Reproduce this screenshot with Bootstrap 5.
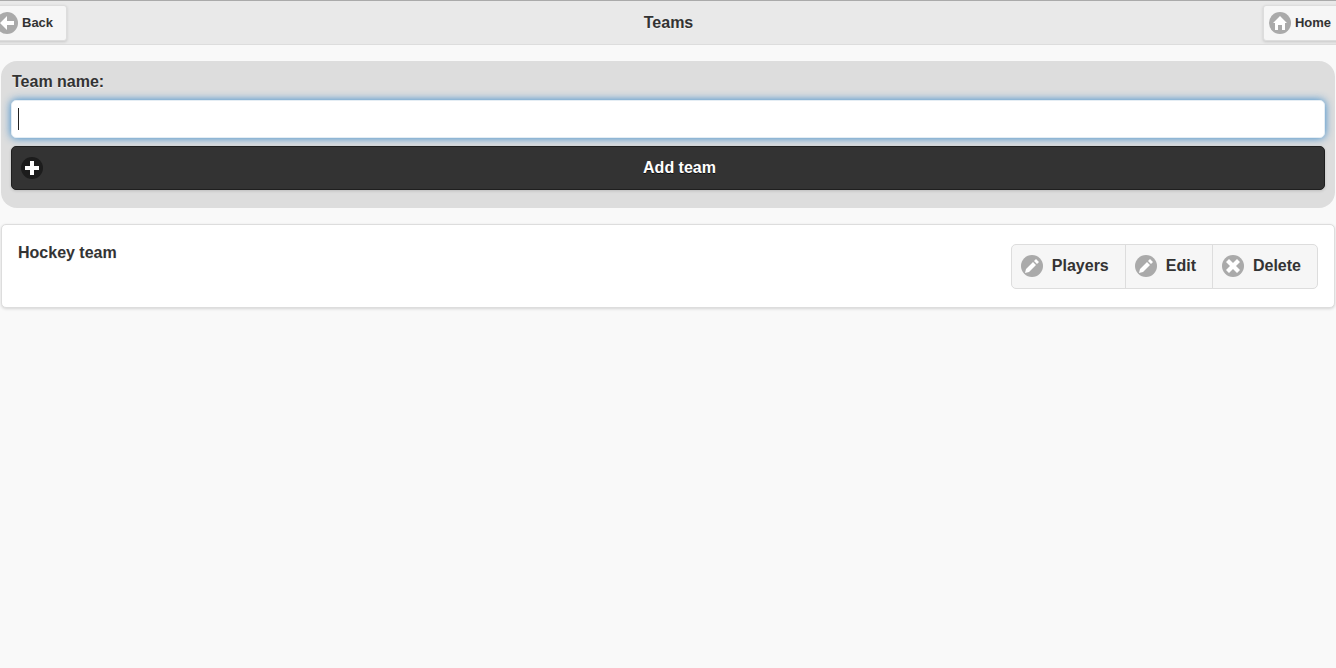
<!DOCTYPE html>
<html lang="en">
<head>
<meta charset="utf-8">
<meta name="viewport" content="width=device-width, initial-scale=1">
<title>Teams</title>
<link href="https://cdn.jsdelivr.net/npm/bootstrap@5.3.0/dist/css/bootstrap.min.css" rel="stylesheet">
<style>
body { font: 700 16px/20px "Liberation Sans", Arial, sans-serif; color: #333; background: #f9f9f9; text-shadow: 0 1px 0 #f3f3f3; }
.topbar { height: 45px; background: #e9e9e9; border-top: 1px solid #aaa; border-bottom: 1px solid #ddd; }
.topbar h1 { font-size: 16px; line-height: 20px; font-weight: 700; padding-left: 1px; }
.btn { --bs-btn-font-weight: 700; --bs-btn-line-height: 20px; --bs-btn-font-size: 16px; --bs-btn-color: #333; --bs-btn-bg: #f6f6f6; --bs-btn-border-color: #ddd; --bs-btn-hover-bg: #ededed; --bs-btn-hover-color: #333; --bs-btn-hover-border-color: #ddd; --bs-btn-border-radius: 5px; text-shadow: inherit; }
.bar-btn { --bs-btn-font-size: 13px; --bs-btn-border-radius: 3px; height: 36px; padding: 0 13px 0 1px; gap: 4px; box-shadow: 0 1px 3px rgba(0,0,0,.15); }
.back { margin-left: -6px; }
.home { margin-right: -9px; padding-left: 5px; }
.disc { width: 22px; height: 22px; border-radius: 50%; background: #aaa; display: grid; place-items: center; flex: none; }
.disc svg { width: 14px; height: 14px; fill: #fff; display: block; }
.page-body { padding: 16px 1px; }
.team-form { background: #ddd; border-radius: 16px; padding: 11px 10px 18px; }
.team-form label { padding-left: 1px; }
.team-form .form-control { height: 38px; padding: 0 6px; border: 1px solid #e4edf4; border-radius: 5px; box-shadow: 0 0 9px #38c; color: #333; font-size: 16px; }
/* tall, non-blinking caret while the field is focused and empty */
.team-form .form-control:focus:placeholder-shown { caret-color: transparent; background: #fff linear-gradient(#222, #222) 6px center / 1px 22px no-repeat; }
.btn-add { --bs-btn-color: #fff; --bs-btn-bg: #333; --bs-btn-border-color: #1f1f1f; --bs-btn-hover-bg: #444; --bs-btn-hover-color: #fff; height: 44px; padding: 0 8px 0 9px; text-shadow: 0 1px 0 #111; box-shadow: 0 1px 3px rgba(0,0,0,.15); }
.btn-add .disc { background: #1c1c1c; }
.team { background: #fff; border: 1px solid #ddd; border-radius: 5px; padding: 19px 16px 18px; box-shadow: 0 1px 3px rgba(0,0,0,.15); }
.team h2 { font-size: 16px; line-height: 18px; font-weight: 700; }
.team .btn { height: 45px; padding: 0 16px 0 9px; gap: 9px; }
.team .btn, .btn-add { padding-bottom: 1px; }
</style>
</head>
<body>
<svg class="d-none" aria-hidden="true">
  <symbol id="i-back" viewBox="0 0 14 14"><path d="M7 5V0L0 7l7 7V9h7V5z"/></symbol>
  <symbol id="i-home" viewBox="0 0 14 14"><path d="M7 0 0 7h2v7h3V9h4v5h3V7h2z"/></symbol>
  <symbol id="i-plus" viewBox="0 0 14 14"><path d="M14 5H9V0H5v5H0v4h5v5h4V9h5z"/></symbol>
  <symbol id="i-edit" viewBox="0 0 14 14"><path d="M1 10l-1 4 4-1 7-7-3-3zM11 0 9 2l3 3 2-2z"/></symbol>
  <symbol id="i-delete" viewBox="0 0 14 14"><path d="M14 3l-3-3-4 4-4-4-3 3 4 4-4 4 3 3 4-4 4 4 3-3-4-4z"/></symbol>
</svg>
<header class="topbar d-flex justify-content-between align-items-center overflow-hidden">
  <div class="col d-flex"><button type="button" class="btn bar-btn back d-flex align-items-center"><span class="disc"><svg><use href="#i-back"/></svg></span>Back</button></div>
  <h1 class="m-0">Teams</h1>
  <div class="col d-flex justify-content-end"><button type="button" class="btn bar-btn home d-flex align-items-center"><span class="disc"><svg><use href="#i-home"/></svg></span>Home</button></div>
</header>
<main class="page-body d-flex flex-column gap-3">
  <form class="team-form d-flex flex-column gap-2">
    <label for="team-name">Team name:</label>
    <input id="team-name" class="form-control" type="text" placeholder=" " autocomplete="off" autofocus>
    <button type="button" class="btn btn-add d-flex align-items-center"><span class="disc"><svg><use href="#i-plus"/></svg></span><span class="flex-grow-1">Add team</span></button>
  </form>
  <section class="team d-flex justify-content-between align-items-start">
    <h2 class="m-0">Hockey team</h2>
    <div class="btn-group" role="group" aria-label="Hockey team actions">
      <button type="button" class="btn d-flex align-items-center"><span class="disc"><svg><use href="#i-edit"/></svg></span>Players</button>
      <button type="button" class="btn d-flex align-items-center"><span class="disc"><svg><use href="#i-edit"/></svg></span>Edit</button>
      <button type="button" class="btn d-flex align-items-center"><span class="disc"><svg><use href="#i-delete"/></svg></span>Delete</button>
    </div>
  </section>
</main>
</body>
</html>
